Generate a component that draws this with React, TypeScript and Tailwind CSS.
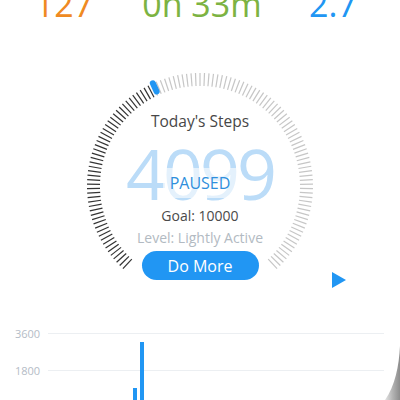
import React from "react";

const CX = 120;
const CY = 120;
const START = -137;
const END = 137;
const N = 120;
const PROGRESS = 0.41;

function Dial() {
  const ticks = [];
  const markAngle = START + (END - START) * PROGRESS;
  for (let i = 0; i <= N; i++) {
    const a = START + ((END - START) * i) / N;
    const r = (a * Math.PI) / 180;
    const r1 = 100;
    const r2 = 113;
    const x1 = CX + r1 * Math.sin(r);
    const y1 = CY - r1 * Math.cos(r);
    const x2 = CX + r2 * Math.sin(r);
    const y2 = CY - r2 * Math.cos(r);
    const dark = a < markAngle - 1;
    ticks.push(
      <line
        key={i}
        x1={x1}
        y1={y1}
        x2={x2}
        y2={y2}
        stroke={dark ? "#333333" : "#c6c6c6"}
        strokeWidth={1.2}
      />
    );
  }
  const mr = (markAngle * Math.PI) / 180;
  return (
    <svg className="absolute inset-0" width={240} height={240} viewBox="0 0 240 240">
      {ticks}
      <line
        x1={CX + 104 * Math.sin(mr)}
        y1={CY - 104 * Math.cos(mr)}
        x2={CX + 113 * Math.sin(mr)}
        y2={CY - 113 * Math.cos(mr)}
        stroke="#2196f3"
        strokeWidth={6}
        strokeLinecap="round"
      />
    </svg>
  );
}

export default function App() {
  return (
    <div
      className="relative w-[400px] h-[400px] overflow-hidden bg-white"
      style={{ fontFamily: '"Open Sans", "Noto Sans", sans-serif' }}
    >
      {/* top stats */}
      <div className="flex -mt-[13px] text-[34px] leading-none">
        <div className="w-[128px] text-center text-[#ef8a22]">127</div>
        <div className="w-[148px] text-center text-[#7cb342]">0h 33m</div>
        <div className="w-[114px] text-center text-[#2196f3]">2.7</div>
      </div>

      {/* dial section */}
      <div className="flex mt-[45px]">
        <div className="w-[80px]" />
        <div className="relative w-[240px] h-[240px]">
          <Dial />
          <div className="relative flex flex-col items-center pt-[45px]">
            <div className="h-[20px] leading-[20px] text-[15.5px] text-[#474747]">Today's Steps</div>
            <div className="relative mt-[7px] h-[68px]">
              <div className="text-[70px] leading-[70px] text-[#bbdcf8] tracking-[-3px]">4099</div>
              <div className="absolute left-1/2 -translate-x-1/2 top-[30px] w-[74px] h-[30px] bg-white/60 flex items-center justify-center">
                <span className="text-[16px] text-[#2f8fdc] leading-none">PAUSED</span>
              </div>
            </div>
            <div className="h-[20px] leading-[20px] text-[14px] text-[#4a4a4a]">Goal: 10000</div>
            <div className="mt-[2px] h-[20px] leading-[20px] text-[14px] text-[#b2bac2]">Level: Lightly Active</div>
            <div className="mt-[3px] w-[117px] h-[29px] rounded-full bg-[#2196f3] flex items-center justify-center text-white text-[16px]">
              Do More
            </div>
          </div>
        </div>
        <div className="flex flex-col justify-end pb-[18px] pl-[11px]">
          <svg width="16" height="16" viewBox="0 0 16 16">
            <path d="M1 0 L15 8 L1 16 Z" fill="#2196f3" />
          </svg>
        </div>
      </div>

      {/* chart */}
      <div className="relative mt-[9px] pl-[15px] pr-[16px]">
        <div className="flex items-center h-[37px]">
          <div className="w-[33px] text-[11px] text-[#b4bcc6] leading-none">3600</div>
          <div className="flex-1 h-px bg-[#eceff2]" />
        </div>
        <div className="flex items-center h-[37px]">
          <div className="w-[33px] text-[11px] text-[#b4bcc6] leading-none">1800</div>
          <div className="flex-1 h-px bg-[#eceff2]" />
        </div>
        <div className="absolute left-[133px] top-[73px] w-[4px] h-[40px] bg-[#2196f3]" />
        <div className="absolute left-[140px] top-[27px] w-[4px] h-[90px] bg-[#2196f3]" />
      </div>

      {/* page curl */}
      <svg className="absolute right-0 bottom-0" width="30" height="60" viewBox="0 0 30 60">
        <defs>
          <linearGradient id="curl" x1="0" y1="0" x2="1" y2="0">
            <stop offset="0" stopColor="#e4e4e4" />
            <stop offset="0.5" stopColor="#b4b4b4" />
            <stop offset="1" stopColor="#8c8c8c" />
          </linearGradient>
        </defs>
        <path d="M30 6 C29 26 25 46 15 60 L30 60 Z" fill="url(#curl)" />
      </svg>
    </div>
  );
}
